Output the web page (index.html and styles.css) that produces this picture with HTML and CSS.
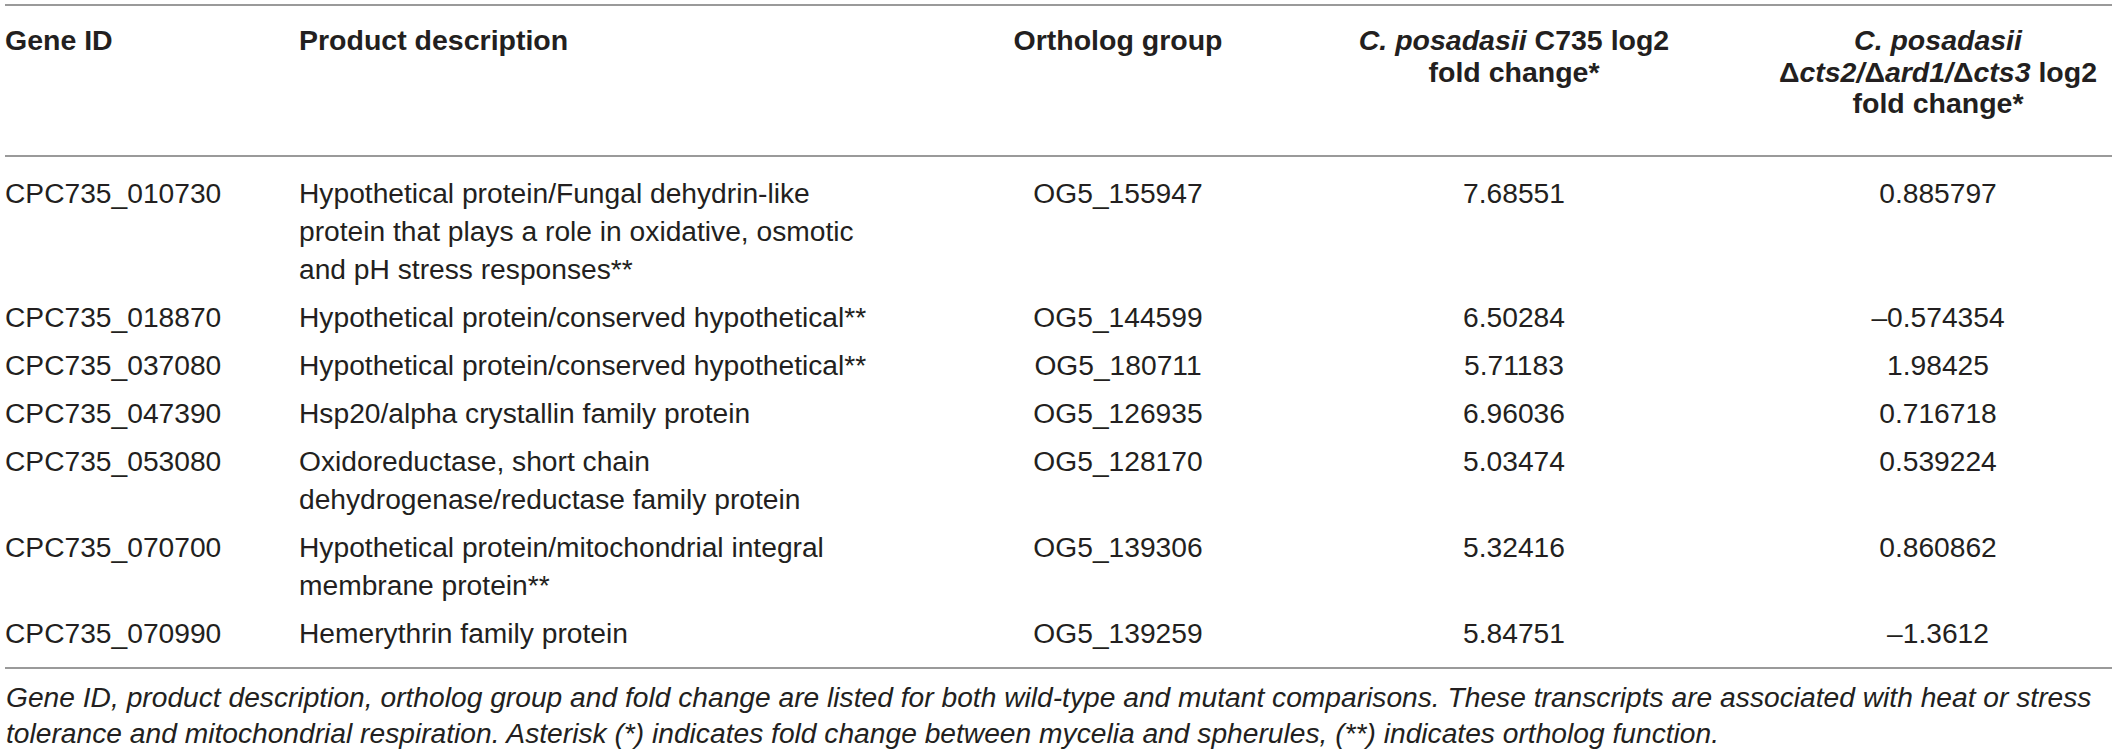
FILE: index.html
```html
<!DOCTYPE html>
<html lang="en">
<head>
<meta charset="utf-8">
<title>Transcripts associated with heat or stress tolerance</title>
<link rel="stylesheet" href="styles.css">
</head>
<body>
<div class="page">
  <table class="data">
    <colgroup>
      <col class="c-gene">
      <col class="c-desc">
      <col class="c-og">
      <col class="c-wt">
      <col class="c-mut">
    </colgroup>
    <thead>
      <tr>
        <th class="left">Gene ID</th>
        <th class="left">Product description</th>
        <th>Ortholog group</th>
        <th><i>C. posadasii</i> C735 log2<br>fold change*</th>
        <th><i>C. posadasii</i><br>&Delta;<i>cts2/</i>&Delta;<i>ard1/</i>&Delta;<i>cts3</i> log2<br>fold change*</th>
      </tr>
    </thead>
    <tbody>
      <tr>
        <td class="left">CPC735_010730</td>
        <td class="left">Hypothetical protein/Fungal dehydrin-like<br>protein that plays a role in oxidative, osmotic<br>and pH stress responses**</td>
        <td>OG5_155947</td>
        <td>7.68551</td>
        <td>0.885797</td>
      </tr>
      <tr>
        <td class="left">CPC735_018870</td>
        <td class="left">Hypothetical protein/conserved hypothetical**</td>
        <td>OG5_144599</td>
        <td>6.50284</td>
        <td>&ndash;0.574354</td>
      </tr>
      <tr>
        <td class="left">CPC735_037080</td>
        <td class="left">Hypothetical protein/conserved hypothetical**</td>
        <td>OG5_180711</td>
        <td>5.71183</td>
        <td>1.98425</td>
      </tr>
      <tr>
        <td class="left">CPC735_047390</td>
        <td class="left">Hsp20/alpha crystallin family protein</td>
        <td>OG5_126935</td>
        <td>6.96036</td>
        <td>0.716718</td>
      </tr>
      <tr>
        <td class="left">CPC735_053080</td>
        <td class="left">Oxidoreductase, short chain<br>dehydrogenase/reductase family protein</td>
        <td>OG5_128170</td>
        <td>5.03474</td>
        <td>0.539224</td>
      </tr>
      <tr>
        <td class="left">CPC735_070700</td>
        <td class="left">Hypothetical protein/mitochondrial integral<br>membrane protein**</td>
        <td>OG5_139306</td>
        <td>5.32416</td>
        <td>0.860862</td>
      </tr>
      <tr>
        <td class="left">CPC735_070990</td>
        <td class="left">Hemerythrin family protein</td>
        <td>OG5_139259</td>
        <td>5.84751</td>
        <td>&ndash;1.3612</td>
      </tr>
    </tbody>
  </table>
  <p class="caption">Gene ID, product description, ortholog group and fold change are listed for both wild-type and mutant comparisons. These transcripts are associated with heat or stress<br>tolerance and mitochondrial respiration. Asterisk (*) indicates fold change between mycelia and spherules, (**) indicates ortholog function.</p>
</div>
</body>
</html>
```

FILE: styles.css
```css
html, body {
  margin: 0;
  padding: 0;
  background: #ffffff;
}

body {
  color: #231f20;
  font-family: "Liberation Sans", Arial, sans-serif;
}

.page {
  padding: 4px 5px 0 5px;
}

.data {
  border-collapse: collapse;
  table-layout: fixed;
  width: 2107px;
}

.c-gene { width: 294px; }
.c-desc { width: 673px; }
.c-og   { width: 292px; }
.c-wt   { width: 500px; }
.c-mut  { width: 348px; }

.data thead tr {
  border-top: 2px solid #9a9a9a;
  border-bottom: 2px solid #9a9a9a;
}

.data th {
  font-size: 28.5px;
  line-height: 31.5px;
  font-weight: bold;
  padding: 19px 0 35px 0;
  vertical-align: top;
  text-align: center;
}

.data td {
  font-size: 28.2px;
  line-height: 38px;
  font-weight: normal;
  padding: 5px 0;
  vertical-align: top;
  text-align: center;
}

.data .left {
  text-align: left;
}

.data tbody tr:first-child td {
  padding-top: 17px;
}

.data tbody tr:last-child td {
  padding-bottom: 15px;
}

.data tbody tr:last-child {
  border-bottom: 2px solid #9a9a9a;
}

.caption {
  margin: 10px 0 0 1px;
  font-size: 28.2px;
  line-height: 36px;
  font-style: italic;
}
```
